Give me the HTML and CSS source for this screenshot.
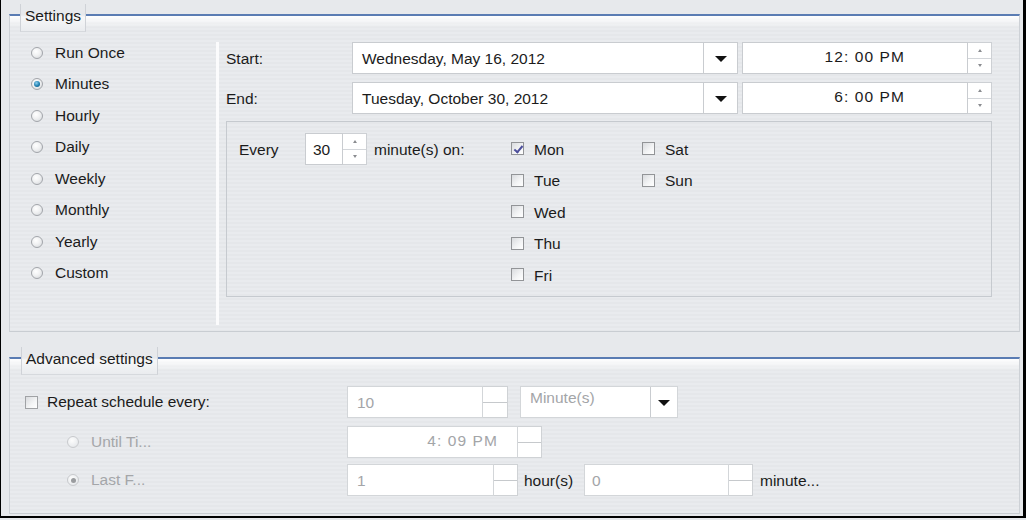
FILE: index.html
```html
<!DOCTYPE html>
<html>
<head>
<meta charset="utf-8">
<link rel="stylesheet" href="styles.css">
</head>
<body>
<div class="frame">
  <section class="group settings">
    <div class="legend">Settings</div>
    <div class="settings-body">
      <ul class="radios">
        <li><span class="radio"></span>Run Once</li>
        <li><span class="radio on"></span>Minutes</li>
        <li><span class="radio"></span>Hourly</li>
        <li><span class="radio"></span>Daily</li>
        <li><span class="radio"></span>Weekly</li>
        <li><span class="radio"></span>Monthly</li>
        <li><span class="radio"></span>Yearly</li>
        <li><span class="radio"></span>Custom</li>
      </ul>
      <div class="main">
        <div class="row">
          <span class="lbl">Start:</span>
          <div class="combo date"><span class="val">Wednesday, May 16, 2012</span><span class="drop"><span class="tri"></span></span></div>
          <div class="spin time"><span class="field">12: 00 PM</span><span class="arrows"><span class="half"><span class="up"></span></span><span class="half"><span class="dn"></span></span></span></div>
        </div>
        <div class="row">
          <span class="lbl">End:</span>
          <div class="combo date"><span class="val">Tuesday, October 30, 2012</span><span class="drop"><span class="tri"></span></span></div>
          <div class="spin time"><span class="field">6: 00 PM</span><span class="arrows"><span class="half"><span class="up"></span></span><span class="half"><span class="dn"></span></span></span></div>
        </div>
        <div class="panel">
          <span class="every">Every</span>
          <div class="spin count"><span class="field">30</span><span class="arrows"><span class="half"><span class="up"></span></span><span class="half"><span class="dn"></span></span></span></div>
          <span class="on-lbl">minute(s) on:</span>
          <div class="days">
            <label class="day"><span class="check on"></span>Mon</label>
            <label class="day"><span class="check"></span>Sat</label>
            <label class="day"><span class="check"></span>Tue</label>
            <label class="day"><span class="check"></span>Sun</label>
            <label class="day"><span class="check"></span>Wed</label>
            <span></span>
            <label class="day"><span class="check"></span>Thu</label>
            <span></span>
            <label class="day"><span class="check"></span>Fri</label>
          </div>
        </div>
      </div>
    </div>
  </section>

  <section class="group advanced">
    <div class="legend adv-legend">Advanced settings</div>
    <div class="adv-body">
      <div class="adv-row r1">
        <label class="adv-lbl chk-lbl"><span class="check"></span>Repeat schedule every:</label>
        <div class="spin dis w10"><span class="field">10</span><span class="arrows blank"><span class="half"></span><span class="half"></span></span></div>
        <div class="combo dis unit"><span class="val">Minute(s)</span><span class="drop"><span class="tri"></span></span></div>
      </div>
      <div class="adv-row r2">
        <label class="adv-lbl rad-lbl dis-text"><span class="radio dis"></span>Until Ti...</label>
        <div class="spin dis wtime"><span class="field">4: 09 PM</span><span class="arrows blank"><span class="half"></span><span class="half"></span></span></div>
      </div>
      <div class="adv-row r3">
        <label class="adv-lbl rad-lbl dis-text"><span class="radio dis on-dis"></span>Last F...</label>
        <div class="spin dis w1"><span class="field">1</span><span class="arrows blank"><span class="half"></span><span class="half"></span></span></div>
        <span class="unit-lbl hours">hour(s)</span>
        <div class="spin dis w0"><span class="field">0</span><span class="arrows blank"><span class="half"></span><span class="half"></span></span></div>
        <span class="unit-lbl mins">minute...</span>
      </div>
    </div>
  </section>
</div>
</body>
</html>
```

FILE: styles.css
```css
* { box-sizing: border-box; }
html, body {
  margin: 0;
  padding: 0;
  background: #e7e9ec;
}
body {
  font-family: "Liberation Sans", Arial, sans-serif;
  font-size: 15.5px;
  color: #1b1b1b;
  width: 1026px;
  height: 520px;
  overflow: hidden;
}
.frame {
  width: 1026px;
  height: 518px;
  border-left: 1px solid #000;
  border-right: 3px solid #000;
  border-bottom: 2px solid #000;
  padding: 14px 3px 0 8px;
  background: #e7e9ec;
}
.group {
  position: relative;
  border-top: 2px solid #5a7cb3;
  border-left: 1px solid #cdd1d6;
  border-right: 1px solid #cdd1d6;
  border-bottom: 1px solid #c9cdd2;
  background:
    linear-gradient(to bottom, rgba(255,255,255,0.95) 0, rgba(255,255,255,0) 12px),
    repeating-linear-gradient(to bottom, #e9ebee 0 2px, #e5e7ea 2px 4px);
}
.settings { height: 318px; }
.advanced { height: 157px; margin-top: 25px; }
.legend {
  position: absolute;
  top: -12px;
  left: 10px;
  height: 28px;
  padding: 1px 4px 0;
  line-height: 21px;
  border-left: 1px solid #cfd2d7;
  border-right: 1px solid #cfd2d7;
  border-bottom: 1px solid #d6d9dd;
  background: linear-gradient(to bottom, #e7e9ec 0 11px, #f6f7f8 13px, #e9ebee 28px);
}
.adv-legend { left: 11px; }

/* Settings body */
.settings-body {
  display: flex;
  height: 100%;
}
.radios {
  list-style: none;
  margin: 0;
  padding: 21px 0 0 21px;
  width: 206px;
  flex: none;
}
.radios li {
  height: 31.5px;
  display: flex;
  align-items: center;
}
.radio {
  width: 12px;
  height: 12px;
  border-radius: 50%;
  border: 1px solid #a2a5aa;
  background: radial-gradient(circle at 40% 35%, #ffffff 0, #f0f1f2 45%, #d2d5d9 100%);
  margin-right: 12px;
  flex: none;
  position: relative;
}
.radio.on::after {
  content: "";
  position: absolute;
  left: 2px; top: 2px;
  width: 6px; height: 6px;
  border-radius: 50%;
  background: radial-gradient(circle at 40% 35%, #8fd0ef 0, #1f7fb0 55%, #0e4f78 100%);
}
.radio.dis {
  border-color: #c8cacd;
  background: radial-gradient(circle at 40% 35%, #fdfdfd 0, #eceef0 60%, #dcdee1 100%);
}
.radio.on-dis::after {
  content: "";
  position: absolute;
  left: 2.5px; top: 2.5px;
  width: 5px; height: 5px;
  border-radius: 50%;
  background: #9a9c9f;
}

.main {
  flex: 1;
  margin: 26px 0 6px;
  border-left: 3px solid #fbfbfc;
  padding: 0 27px 0 7px;
}
.row {
  display: flex;
  align-items: center;
  height: 32px;
  margin-bottom: 8px;
}
.lbl { width: 126px; flex: none; padding-top: 2px; }
.combo {
  display: flex;
  height: 32px;
  background: #fff;
  border: 1px solid #c9ccd0;
}
.combo .val {
  flex: 1;
  padding-left: 9px;
  padding-top: 2px;
  display: flex;
  align-items: center;
}
.drop {
  width: 34px;
  border-left: 1px solid #c9ccd0;
  display: flex;
  align-items: center;
  justify-content: center;
  background: #fff;
}
.tri {
  width: 0; height: 0;
  border-left: 6px solid transparent;
  border-right: 6px solid transparent;
  border-top: 6px solid #111;
  margin-top: 2px;
}
.date { width: 386px; }
.spin {
  display: flex;
  height: 32px;
}
.spin .field {
  background: #fff;
  border: 1px solid #c9ccd0;
  display: flex;
  align-items: center;
}
.arrows {
  width: 24px;
  display: flex;
  flex-direction: column;
  border: 1px solid #cdd0d4;
  border-left: none;
  background: #fff;
}
.arrows .half {
  flex: 1;
  display: flex;
  align-items: center;
  justify-content: center;
}
.arrows .half + .half { border-top: 1px solid #d3d6da; }
.up, .dn {
  width: 0; height: 0;
  border-left: 2.5px solid transparent;
  border-right: 2.5px solid transparent;
}
.up { border-bottom: 3px solid #8a8c90; }
.dn { border-top: 3px solid #8a8c90; }
.time { margin-left: 4px; }
.time .field {
  width: 226px;
  justify-content: flex-end;
  padding-right: 62px;
  padding-bottom: 3px;
  letter-spacing: 1.1px;
}
.panel {
  margin-top: -1px;
  height: 176px;
  border: 1px solid #c6cacf;
  display: flex;
  align-items: flex-start;
  padding: 11px 0 0 12px;
}
.every {
  width: 66px;
  line-height: 34px;
  flex: none;
}
.count .field {
  width: 38px;
  padding-left: 7px;
  padding-top: 1px;
}
.on-lbl {
  margin-left: 7px;
  width: 137px;
  line-height: 34px;
  flex: none;
}
.days {
  display: grid;
  grid-template-columns: 131px auto;
  grid-auto-rows: 31.5px;
}
.day {
  display: flex;
  align-items: center;
  padding-top: 2px;
}
.check {
  width: 13px;
  height: 13px;
  border: 1px solid #929497;
  background: linear-gradient(135deg, #d9dbde 0, #f4f5f6 60%, #fff 100%);
  margin-right: 10px;
  flex: none;
  position: relative;
}
.day .check { margin-top: -2px; }
.check.on::after {
  content: "";
  position: absolute;
  left: 3.5px; top: 0.5px;
  width: 3px; height: 7px;
  border-right: 2px solid #4d4f9c;
  border-bottom: 2px solid #4d4f9c;
  transform: rotate(40deg);
}

/* Advanced */
.adv-body { padding: 27px 0 0 0; }
.adv-row {
  display: flex;
  align-items: center;
  height: 32px;
}
.r1 { margin-bottom: 8px; }
.r2 { margin-bottom: 6px; }
.adv-lbl {
  width: 337px;
  flex: none;
  display: flex;
  align-items: center;
}
.chk-lbl { padding-left: 15px; }
.chk-lbl .check { margin-right: 9px; border-color: #a0a2a5; }
.rad-lbl { padding-left: 57px; }
.dis-text { color: #a4a6a9; }
.spin.dis .field, .combo.dis {
  border-color: #d3d6d9;
  color: #a3a5a8;
}
.arrows.blank { width: 25px; border-color: #cfd2d5; }
.arrows.blank .half + .half { border-top-color: #c6c9cc; }
.w10 .field { width: 136px; padding-left: 9px; padding-top: 2px; }
.unit { margin-left: 12px; width: 158px; }
.unit .val { align-items: flex-start; padding-top: 2px; padding-left: 9px; }
.unit .drop { width: 27px; border-left-color: #c9ccd0; }
.wtime .field { width: 171px; justify-content: flex-end; padding-right: 19px; padding-bottom: 3px; letter-spacing: 1.1px; }
.wtime .arrows, .w1 .arrows, .w0 .arrows { width: 24px; }
.w1 .field { width: 147px; padding-left: 9px; padding-top: 2px; }
.unit-lbl { color: #1b1b1b; padding-top: 2px; }
.hours { margin-left: 6px; width: 60px; }
.w0 .field { width: 145px; padding-left: 7px; padding-top: 2px; }
.mins { margin-left: 7px; }
```
